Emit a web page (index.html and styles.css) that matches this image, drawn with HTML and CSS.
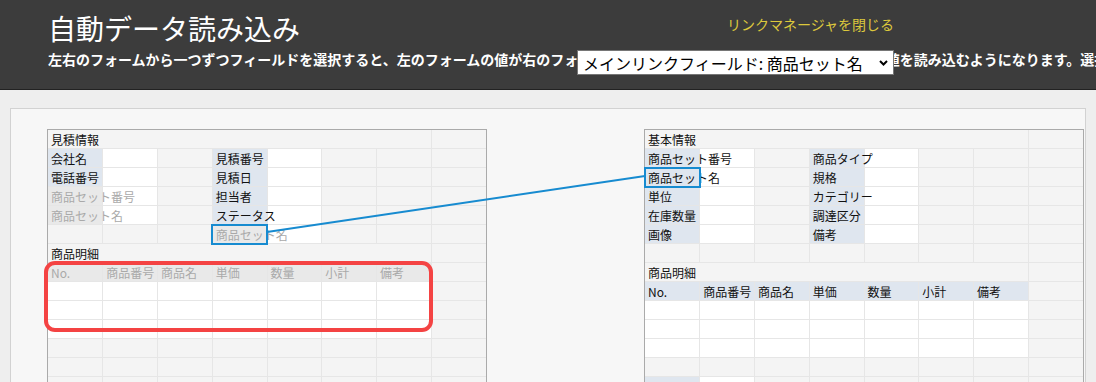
FILE: index.html
```html
<!DOCTYPE html>
<html lang="ja">
<head>
    <meta charset="UTF-8">
    <meta name="viewport" content="width=device-width, initial-scale=1.0">
    <title>自動データ読み込み</title>
    <link rel="stylesheet" href="styles.css">
</head>
<body>

<!-- Header -->
<header class="topbar">
    <div class="topbar-row">
        <h1>自動データ読み込み</h1>
        <a href="#" class="close-link">リンクマネージャを閉じる</a>
    </div>
    <p class="lead">左右のフォームから一つずつフィールドを選択すると、左のフォームの値が右のフォームの同じフィールドに自動的に反映され、その値を読み込むようになります。選択したリンクは保存されます。</p>
    <div class="link-picker">
        <select id="main-link">
            <option>メインリンクフィールド: 商品セット名</option>
            <option>メインリンクフィールド: 商品セット番号</option>
        </select>
        <svg class="chevron" width="9" height="6" viewBox="0 0 9 6"><path d="M1 1 L4.5 4.5 L8 1" fill="none" stroke="#000" stroke-width="2"/></svg>
    </div>
</header>

<div class="panel">

    <!-- Left form: 見積 -->
    <div class="form">
        <table class="grid">
            <colgroup><col><col><col><col><col><col><col><col></colgroup>
            <tr><td colspan="7">見積情報</td><td></td></tr>
            <tr><td class="lb">会社名</td><td class="in"></td><td></td><td class="lb">見積番号</td><td class="in"></td><td></td><td></td><td></td></tr>
            <tr><td class="lb">電話番号</td><td class="in"></td><td></td><td class="lb">見積日</td><td class="in"></td><td></td><td></td><td></td></tr>
            <tr><td class="dis">商品セット番号</td><td class="in"></td><td></td><td class="lb">担当者</td><td class="in"></td><td></td><td></td><td></td></tr>
            <tr><td class="dis">商品セット名</td><td class="in"></td><td></td><td class="lb">ステータス</td><td class="in"></td><td></td><td></td><td></td></tr>
            <tr><td></td><td></td><td></td><td class="dis sel">商品セット名</td><td class="in"></td><td></td><td></td><td></td></tr>
            <tr><td colspan="7">商品明細</td><td></td></tr>
            <tr><td class="dis">No.</td><td class="dis">商品番号</td><td class="dis">商品名</td><td class="dis">単価</td><td class="dis">数量</td><td class="dis">小計</td><td class="dis">備考</td><td></td></tr>
            <tr><td class="in"></td><td class="in"></td><td class="in"></td><td class="in"></td><td class="in"></td><td class="in"></td><td class="in"></td><td></td></tr>
            <tr><td class="in"></td><td class="in"></td><td class="in"></td><td class="in"></td><td class="in"></td><td class="in"></td><td class="in"></td><td></td></tr>
            <tr><td class="in"></td><td class="in"></td><td class="in"></td><td class="in"></td><td class="in"></td><td class="in"></td><td class="in"></td><td></td></tr>
            <tr><td></td><td></td><td></td><td></td><td></td><td></td><td></td><td></td></tr>
            <tr><td></td><td></td><td></td><td></td><td></td><td></td><td></td><td></td></tr>
            <tr><td></td><td></td><td></td><td></td><td></td><td></td><td></td><td></td></tr>
            <tr><td></td><td></td><td></td><td></td><td></td><td></td><td></td><td></td></tr>
        </table>
        <div class="callout"></div>
    </div>

    <!-- Right form: 商品セット -->
    <div class="form">
        <table class="grid">
            <colgroup><col><col><col><col><col><col><col><col></colgroup>
            <tr><td colspan="7">基本情報</td><td></td></tr>
            <tr><td class="lb">商品セット番号</td><td class="in"></td><td></td><td class="lb">商品タイプ</td><td class="in"></td><td></td><td></td><td></td></tr>
            <tr><td class="lb sel">商品セット名</td><td class="in"></td><td></td><td class="lb">規格</td><td class="in"></td><td></td><td></td><td></td></tr>
            <tr><td class="lb">単位</td><td class="in"></td><td></td><td class="lb">カテゴリー</td><td class="in"></td><td></td><td></td><td></td></tr>
            <tr><td class="lb">在庫数量</td><td class="in"></td><td></td><td class="lb">調達区分</td><td class="in"></td><td></td><td></td><td></td></tr>
            <tr><td class="lb">画像</td><td class="in"></td><td></td><td class="lb">備考</td><td class="in"></td><td></td><td></td><td></td></tr>
            <tr><td></td><td></td><td></td><td></td><td></td><td></td><td></td><td></td></tr>
            <tr><td colspan="7">商品明細</td><td></td></tr>
            <tr><td class="lb">No.</td><td class="lb">商品番号</td><td class="lb">商品名</td><td class="lb">単価</td><td class="lb">数量</td><td class="lb">小計</td><td class="lb">備考</td><td></td></tr>
            <tr><td class="in"></td><td class="in"></td><td class="in"></td><td class="in"></td><td class="in"></td><td class="in"></td><td class="in"></td><td></td></tr>
            <tr><td class="in"></td><td class="in"></td><td class="in"></td><td class="in"></td><td class="in"></td><td class="in"></td><td class="in"></td><td></td></tr>
            <tr><td class="in"></td><td class="in"></td><td class="in"></td><td class="in"></td><td class="in"></td><td class="in"></td><td class="in"></td><td></td></tr>
            <tr><td></td><td></td><td></td><td></td><td></td><td></td><td></td><td></td></tr>
            <tr><td class="lb"></td><td class="in"></td><td></td><td></td><td></td><td></td><td></td><td></td></tr>
            <tr><td class="lb"></td><td class="in"></td><td></td><td></td><td></td><td></td><td></td><td></td></tr>
        </table>
    </div>

</div>

<!-- Link between the two selected fields -->
<svg class="link-line" width="1096" height="382" viewBox="0 0 1096 382">
    <line x1="267" y1="232" x2="645" y2="176" stroke="#178bd0" stroke-width="2"/>
</svg>

</body>
</html>
```

FILE: styles.css
```css
body {
    margin: 0;
    background-color: #eeeeee;
    font-family: "Noto Sans CJK JP", "Noto Sans", sans-serif;
    overflow: hidden;
}
.topbar {
    position: relative;
    box-sizing: border-box;
    height: 90px;
    padding: 11px 202px 0 48px;
    background-color: #3c3c3c;
    border-bottom: 1px solid #222;
    color: #fff;
    overflow: hidden;
}
.topbar-row {
    display: flex;
    justify-content: space-between;
    align-items: flex-start;
}
h1 {
    margin: 0;
    font-size: 28px;
    font-weight: normal;
    line-height: 34px;
}
.close-link {
    margin-top: 3px;
    font-size: 14px;
    line-height: 20px;
    color: #dcc83c;
    text-decoration: none;
}
.lead {
    margin: 4px 0 0;
    font-size: 14px;
    line-height: 20px;
    font-weight: bold;
    white-space: nowrap;
}
.link-picker {
    position: absolute;
    left: 577px;
    top: 50px;
}
.link-picker select {
    appearance: none;
    display: block;
    width: 317px;
    height: 25px;
    padding: 0 24px 0 5px;
    border: 1px solid #767676;
    border-radius: 0;
    background: #fff;
    color: #000;
    font-family: "Noto Sans CJK JP", sans-serif;
    font-size: 16px;
}
.chevron {
    position: absolute;
    right: 6px;
    top: 10px;
    pointer-events: none;
}
.panel {
    display: flex;
    justify-content: space-between;
    height: 400px;
    margin: 18px 10px 0;
    padding: 20px 1px 0 36px;
    background-color: #f7f7f7;
    border: 1px solid #d2d2d2;
}
.form {
    position: relative;
    box-sizing: border-box;
    width: 440px;
    height: 320px;
    border: 1px solid #aaa;
    border-bottom: none;
}
.grid {
    width: 438px;
    border-collapse: collapse;
    border-style: hidden;
    table-layout: fixed;
    background-color: #f4f4f4;
    font-size: 12px;
}
.grid td {
    height: 16px;
    padding: 2px 3px 0;
    border: 1px solid #e6e6e6;
    line-height: 16px;
    white-space: nowrap;
    overflow: visible;
    color: #111;
}
.grid td.lb {
    background-color: #dfe6ef;
}
.grid td.in {
    background-color: #fff;
}
.grid td.dis {
    background-color: #e9e9e9;
    color: #a9a9a9;
}
.grid td.sel {
    outline: 2px solid #178bd0;
    outline-offset: -1px;
}
.callout {
    position: absolute;
    left: -4px;
    top: 131px;
    box-sizing: border-box;
    width: 389px;
    height: 71px;
    border: 4px solid #f44343;
    border-radius: 11px;
}
.link-line {
    position: absolute;
    left: 0;
    top: 0;
    pointer-events: none;
}
```
